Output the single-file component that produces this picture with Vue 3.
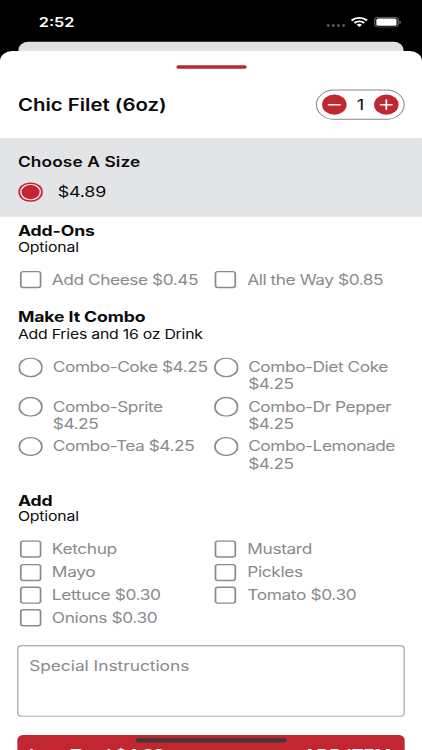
<script setup>
import { ref } from 'vue'

const quantity = ref(1)

const addOns = ['Add Cheese $0.45', 'All the Way $0.85']
const combos = [
  'Combo-Coke $4.25',
  'Combo-Diet Coke\n$4.25',
  'Combo-Sprite\n$4.25',
  'Combo-Dr Pepper\n$4.25',
  'Combo-Tea $4.25',
  'Combo-Lemonade\n$4.25',
]
const extras = [
  'Ketchup',
  'Mustard',
  'Mayo',
  'Pickles',
  'Lettuce $0.30',
  'Tomato $0.30',
  'Onions $0.30',
]
</script>

<template>
  <div class="viewport">
    <div class="screen">
      <header class="status">
        <span class="time">2:52</span>
        <div class="indicators">
          <svg class="dots" width="19" height="5" viewBox="0 0 19 5">
            <g fill="#4b4b4d">
              <rect x="0.5" y="0.8" width="3" height="3.4" rx="1" />
              <rect x="5.5" y="0.8" width="3" height="3.4" rx="1" />
              <rect x="10.5" y="0.8" width="3" height="3.4" rx="1" />
              <rect x="15.5" y="0.8" width="3" height="3.4" rx="1" />
            </g>
          </svg>
          <svg class="wifi" width="17" height="12.5" viewBox="0 0 17 12.5">
            <g fill="none" stroke="#fff" stroke-width="2.3">
              <path d="M0.9 4.5a10.8 10.8 0 0 1 15.2 0" />
              <path d="M3.7 7.5a6.8 6.8 0 0 1 9.6 0" />
            </g>
            <path d="M8.5 12.4 5.9 9.7a3.8 3.8 0 0 1 5.2 0z" fill="#fff" />
          </svg>
          <svg class="battery" width="27" height="13" viewBox="0 0 27 13">
            <rect x="0.6" y="0.6" width="23" height="11.8" rx="3.6" fill="none" stroke="#77777a" stroke-width="1.1" />
            <rect x="2.2" y="2.1" width="19.8" height="8.8" rx="2" fill="#fff" />
            <path d="M24.9 4.4c1.9.7 1.9 3.5 0 4.2z" fill="#77777a" />
          </svg>
        </div>
      </header>

      <div class="back-card"></div>

      <main class="sheet">
        <div class="handle"></div>

        <div class="item-head">
          <h1>Chic Filet (6oz)</h1>
          <div class="stepper">
            <button class="step" aria-label="Remove one" @click="quantity = Math.max(1, quantity - 1)">
              <svg width="24" height="24" viewBox="0 0 24 24"><path d="M6.4 12h11.2" /></svg>
            </button>
            <span class="count">{{ quantity }}</span>
            <button class="step" aria-label="Add one" @click="quantity++">
              <svg width="24" height="24" viewBox="0 0 24 24"><path d="M6.4 12h11.2M12 6.4v11.2" /></svg>
            </button>
          </div>
        </div>

        <section class="size">
          <h2>Choose A Size</h2>
          <div class="size-option">
            <span class="radio on"></span>
            <span class="price">$4.89</span>
          </div>
        </section>

        <section class="group addons">
          <h3>Add-Ons</h3>
          <p class="sub">Optional</p>
          <div class="options">
            <div v-for="label in addOns" :key="label" class="option">
              <svg class="check" viewBox="0 0 24 24"><rect x="2.4" y="2.5" width="19.4" height="19" rx="2.4" /></svg>
              <span class="label">{{ label }}</span>
            </div>
          </div>
        </section>

        <section class="group combo">
          <h3>Make It Combo</h3>
          <p class="sub wide">Add Fries and 16 oz Drink</p>
          <div class="options">
            <div v-for="label in combos" :key="label" class="option">
              <span class="radio"></span>
              <span class="label">{{ label }}</span>
            </div>
          </div>
        </section>

        <section class="group extras">
          <h3>Add</h3>
          <p class="sub">Optional</p>
          <div class="options">
            <div v-for="label in extras" :key="label" class="option">
              <svg class="check" viewBox="0 0 24 24"><rect x="2.4" y="2.5" width="19.4" height="19" rx="2.4" /></svg>
              <span class="label">{{ label }}</span>
            </div>
          </div>
        </section>

        <div class="notes">Special Instructions</div>

        <div class="submit">
          <span class="total">Item Total $4.89</span>
          <span class="add">ADD ITEM</span>
        </div>
      </main>

      <div class="home-indicator"></div>
    </div>
  </div>
</template>

<style>
body {
  background: #000;
  overflow: hidden;
}
</style>

<style scoped>
.viewport {
  width: 422px;
  height: 750px;
  overflow: hidden;
  background: #000;
}

/* 414x896 device layout fitted to the viewport */
.screen {
  position: relative;
  display: flex;
  flex-direction: column;
  width: 414px;
  height: 896px;
  overflow: hidden;
  transform: scale(1.01932, 0.83705);
  transform-origin: 0 0;
  background: #000;
  color: #0b0b0c;
  font-family: Inter, 'Liberation Sans', sans-serif;
}

.status {
  display: flex;
  flex: none;
  justify-content: space-between;
  height: 50.2px;
  padding: 0 20px 0 38px;
  box-sizing: border-box;
  color: #fff;
}

.time {
  padding-top: 16px;
  font-size: 16px;
  font-weight: 600;
  line-height: 21px;
}

.indicators {
  display: flex;
  align-items: flex-start;
  padding-top: 20px;
}

.dots {
  margin: 8.3px 5px 0 0;
}

.wifi {
  margin-right: 6px;
}

.battery {
  margin-top: 0.3px;
}

.back-card {
  flex: none;
  height: 10.8px;
  margin: 0 17.6px;
  border-radius: 10px 10px 0 0;
  background: #e0e0e0;
}

.sheet {
  flex: none;
  height: 900px;
  border-radius: 12px 12px 0 0;
  background: #fff;
  padding-top: 16.7px;
  box-sizing: border-box;
}

.handle {
  width: 69px;
  height: 4.7px;
  margin: 0 auto;
  border-radius: 2.4px;
  background: #b72a35;
}

.item-head {
  display: flex;
  align-items: center;
  justify-content: space-between;
  height: 82.5px;
  padding: 2.8px 17.2px 0 17.6px;
  box-sizing: border-box;
}

h1,
h2,
h3,
p {
  margin: 0;
}

h1 {
  padding-top: 2px;
  font-size: 20px;
  font-weight: 600;
  line-height: 24px;
}

.stepper {
  display: flex;
  align-items: center;
  justify-content: space-between;
  width: 87px;
  height: 35.4px;
  padding: 0 5px 0 5.6px;
  box-sizing: border-box;
  border: 1px solid #85858c;
  border-radius: 18px;
}

.step {
  display: flex;
  width: 24px;
  height: 24px;
  padding: 0;
  border: 0;
  border-radius: 50%;
  background: #c12631;
}

.step path {
  stroke: #fff;
  stroke-width: 1.8;
  stroke-linecap: round;
}

.count {
  font-size: 18px;
  line-height: 22px;
}

.size {
  height: 94.4px;
  padding: 17.5px 17.6px 0;
  box-sizing: border-box;
  background: #e3e4e6;
}

h2 {
  font-size: 17px;
  font-weight: 600;
  line-height: 22px;
  letter-spacing: 0.1px;
}

.size-option {
  display: flex;
  align-items: center;
  gap: 14.6px;
  height: 24px;
  margin-top: 13px;
}

.price {
  font-size: 17.5px;
  line-height: 22px;
  letter-spacing: -0.15px;
}

.radio,
.check {
  flex: none;
  box-sizing: border-box;
}

.radio {
  width: 23.6px;
  height: 23.6px;
  margin: -1.6px 0 0 0.8px;
  border-radius: 50%;
  box-shadow: inset 0 0 0 1.7px #8a8a8e;
}

.radio.on {
  margin-top: 0;
  background: #c12631;
  box-shadow:
    inset 0 0 0 1.7px #c12631,
    inset 0 0 0 3.1px #f6e9ea;
}

.check {
  width: 24px;
  height: 24px;
  fill: none;
  stroke: #8a8a8e;
  stroke-width: 1.7;
}

.group {
  padding: 0 17.6px;
}

.addons {
  padding-top: 6.3px;
}

.combo {
  padding-top: 21.8px;
}

.extras {
  padding-top: 16.9px;
}

h3 {
  font-size: 17.3px;
  font-weight: 700;
  line-height: 20.4px;
  letter-spacing: -0.1px;
}

.sub {
  font-size: 15.5px;
  line-height: 19.6px;
  letter-spacing: -0.17px;
}

.sub.wide {
  letter-spacing: -0.22px;
}

.options {
  display: grid;
  grid-template-columns: 191.7px 1fr;
}

.option {
  display: flex;
  align-items: center;
  height: 27.3px;
}

.addons .options {
  margin-top: 14.7px;
}

.extras .options {
  margin-top: 15px;
}

.combo .options {
  margin-top: 19.3px;
}

.combo .option {
  align-items: flex-start;
  height: 47.4px;
}

.label {
  margin-left: 9.3px;
  color: #8a8a8e;
  font-size: 17px;
  line-height: 20.4px;
  letter-spacing: -0.46px;
  white-space: pre;
}

.combo .label {
  margin-left: 9.8px;
}

.extras .label {
  letter-spacing: -0.38px;
}

.notes {
  height: 84.8px;
  margin: 19.4px 17.4px 0;
  padding: 12px 10.2px;
  box-sizing: border-box;
  border: 1px solid #929296;
  border-radius: 4px;
  color: #8a8a8e;
  font-size: 17px;
  line-height: 24px;
  letter-spacing: -0.03px;
}

.submit {
  display: flex;
  justify-content: space-between;
  height: 54px;
  margin: 22px 17.4px 0;
  padding: 13px 13px 0 11px;
  box-sizing: border-box;
  border-radius: 6px;
  background: #c12631;
  color: #fff;
  font-size: 17.6px;
  font-weight: 600;
  line-height: 22px;
}

.total {
  font-size: 17.3px;
  letter-spacing: -0.18px;
}

.home-indicator {
  position: absolute;
  top: 881.6px;
  left: 133.4px;
  width: 147.4px;
  height: 5.4px;
  border-radius: 3px;
  background: #433538;
}
</style>
